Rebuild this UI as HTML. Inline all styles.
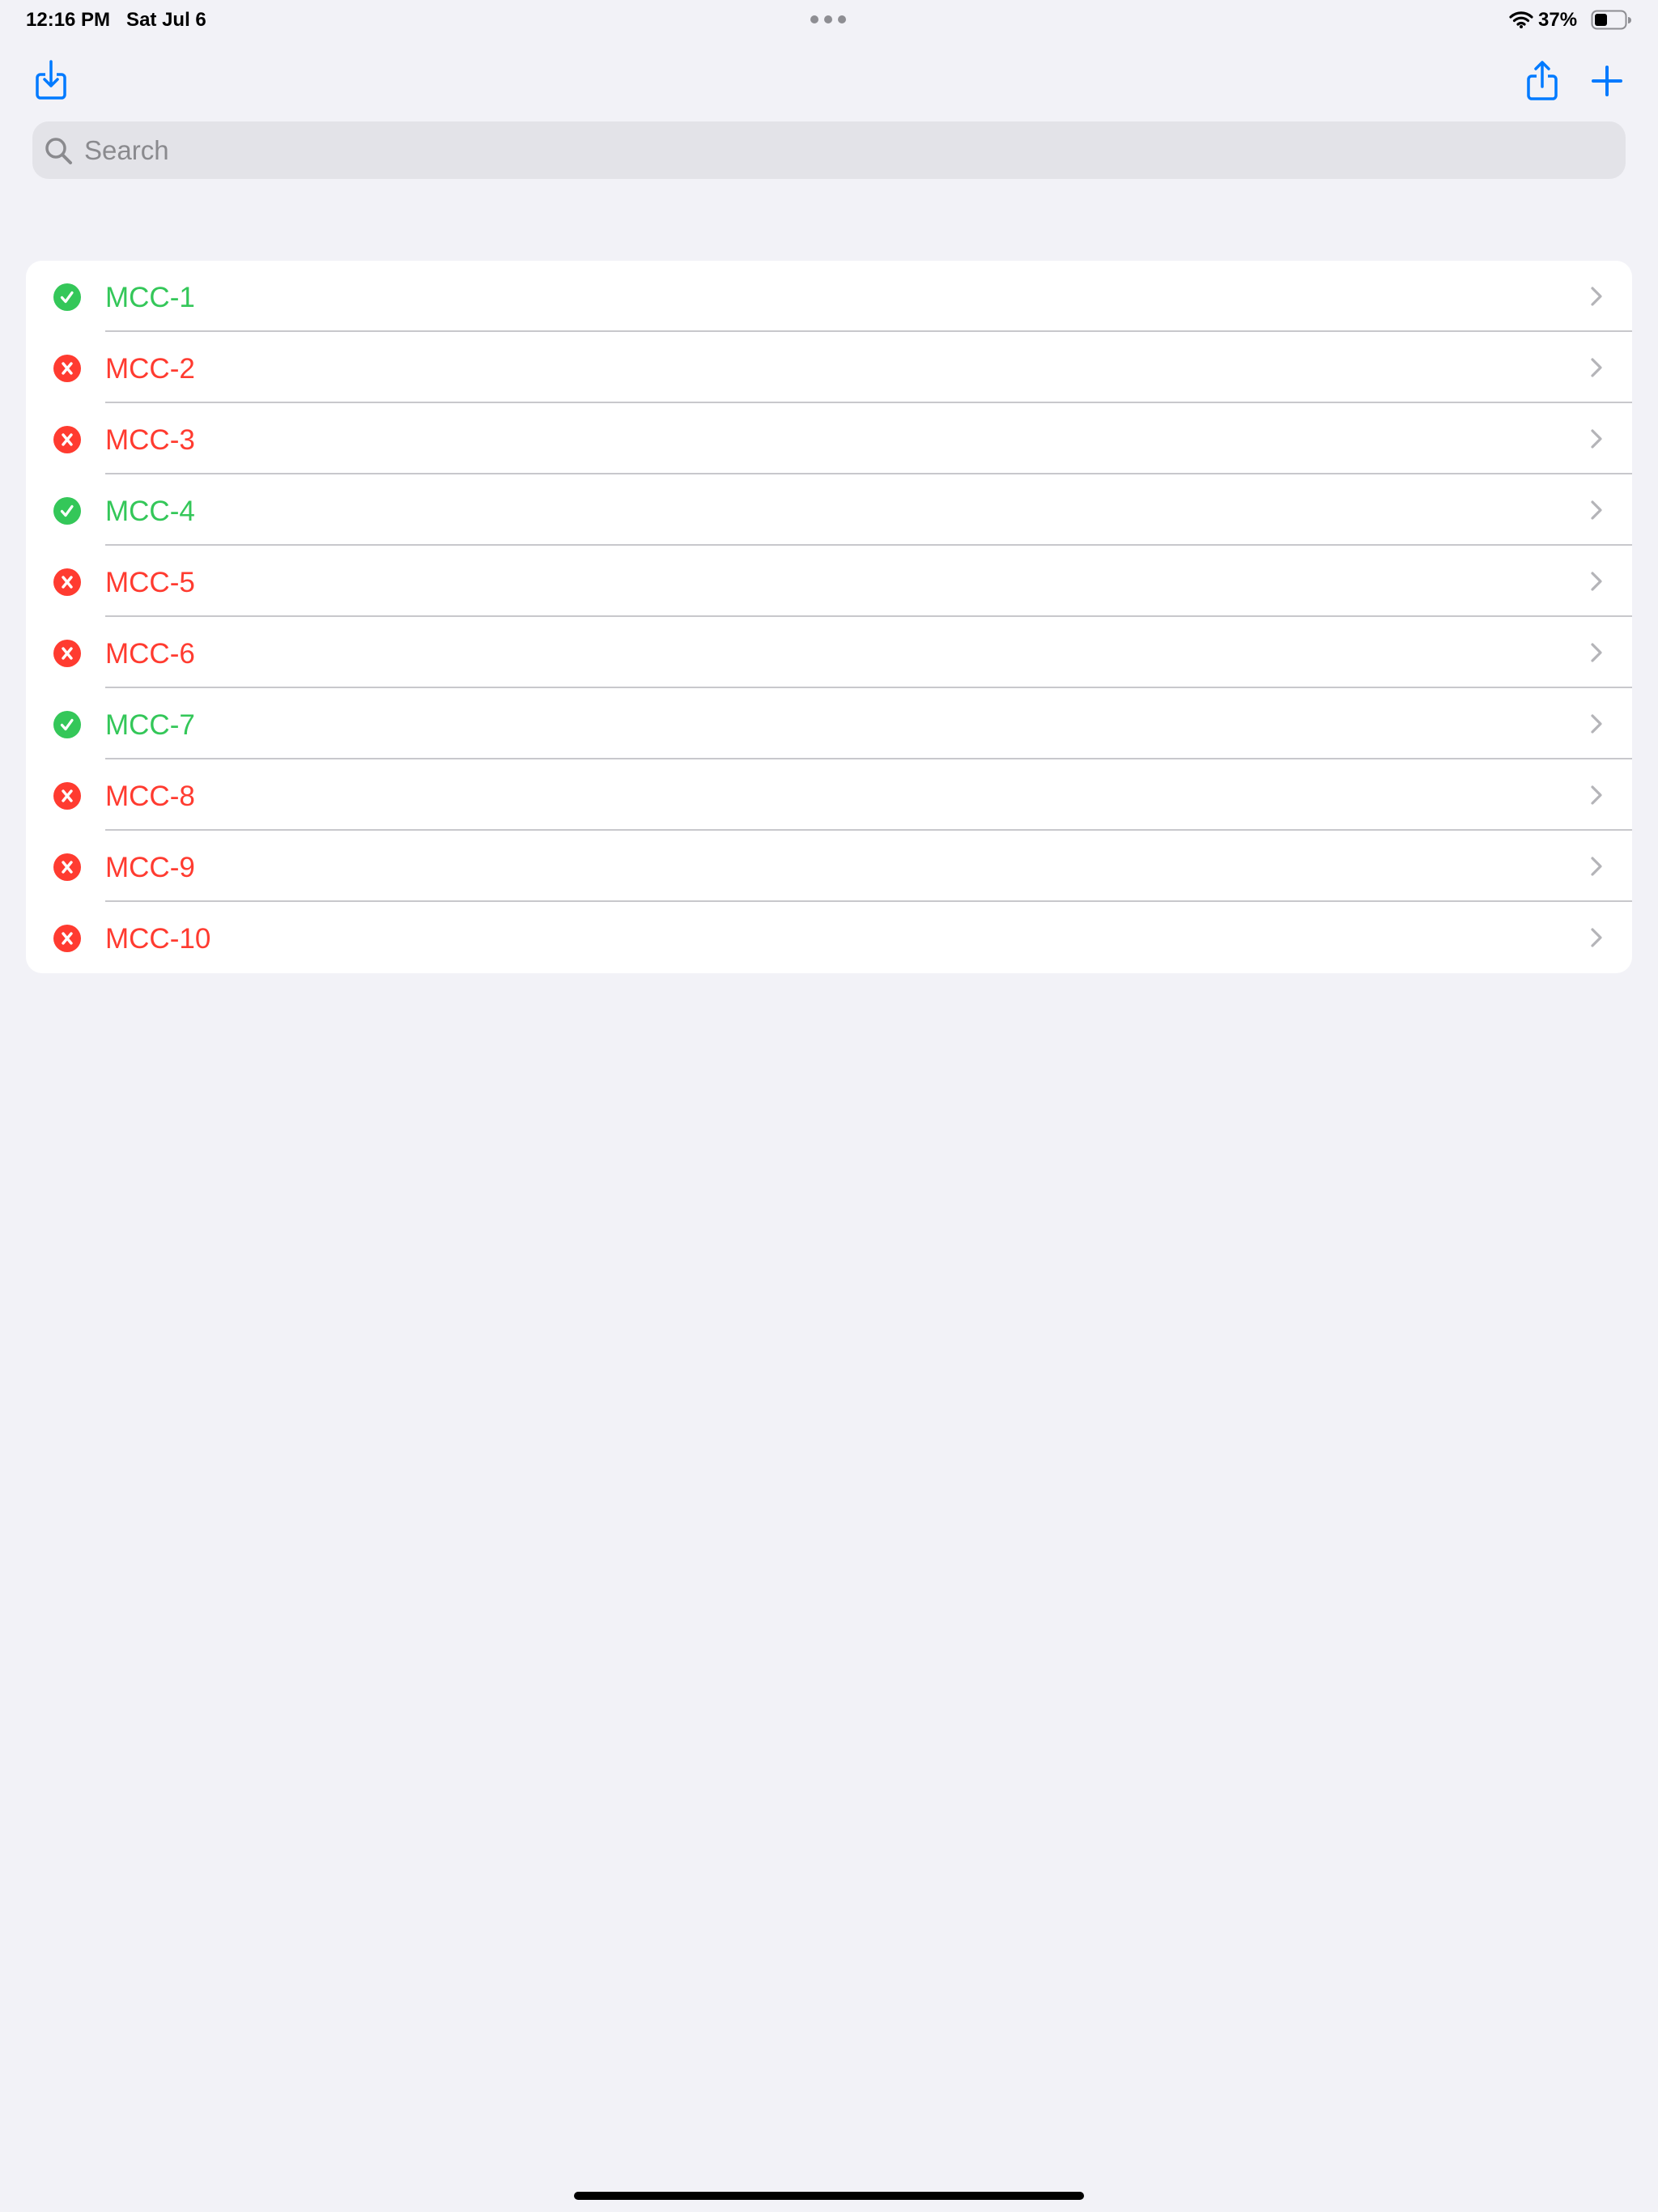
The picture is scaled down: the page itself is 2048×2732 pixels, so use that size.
<!DOCTYPE html>
<html><head><meta charset="utf-8"><style>
*{margin:0;padding:0;box-sizing:border-box}
body{width:2048px;height:2732px;background:#f2f2f7;font-family:"Liberation Sans",sans-serif;position:relative;overflow:hidden}
.abs{position:absolute}
.status{top:11px;font-size:24px;font-weight:bold;color:#000}
.search{left:40px;top:150px;width:1968px;height:71px;background:#e3e3e8;border-radius:20px}
.search span{position:absolute;left:64px;top:17px;font-size:33px;color:#8a8a8e}
.card{left:32px;top:322px;width:1984px;height:880px;background:#fff;border-radius:20px;overflow:hidden}
.row{position:absolute;left:0;width:1984px;height:88px}
.row .t{position:absolute;left:98px;top:26px;font-size:35px}
.row .sep{position:absolute;left:98px;right:0;bottom:0;height:2px;background:#c8c8cc}
.row svg.ic{position:absolute;left:34px;top:28px}
.row svg.ch{position:absolute;left:1932px;top:31px}
.g{color:#34c759}.r{color:#ff3b30}
</style></head><body>
<div class="abs status" style="left:32px">12:16 PM&nbsp;&nbsp;&nbsp;Sat Jul 6</div>
<svg class="abs" style="left:1000px;top:18px" width="46" height="12"><circle cx="6" cy="6" r="5" fill="#8e8e93"/><circle cx="23" cy="6" r="5" fill="#8e8e93"/><circle cx="40" cy="6" r="5" fill="#8e8e93"/></svg>
<svg class="abs" style="left:1864px;top:13px" width="30" height="22" viewBox="0 0 30 22"><path d="M2 8a19 19 0 0 1 26 0M6.5 12.5a12.5 12.5 0 0 1 17 0M11 17a6 6 0 0 1 8 0" stroke="#000" stroke-width="3.2" fill="none" stroke-linecap="round"/><circle cx="15" cy="20" r="2" fill="#000"/></svg>
<div class="abs status" style="left:1900px">37%</div>
<svg class="abs" style="left:1965px;top:12px" width="50" height="26"><rect x="1.5" y="1.5" width="42" height="22" rx="6" fill="none" stroke="#8e8e93" stroke-width="2"/><rect x="5" y="5" width="15" height="15" rx="3" fill="#000"/><path d="M46 9v8a3 3 0 0 0 0-8z" fill="#8e8e93"/></svg>
<svg class="abs" style="left:42px;top:74px" width="46" height="50" viewBox="0 0 46 50"><path d="M14 18H8a4 4 0 0 0-4 4v21a4 4 0 0 0 4 4h26a4 4 0 0 0 4-4V22a4 4 0 0 0-4-4h-6" fill="none" stroke="#007aff" stroke-width="3.5"/><path d="M21 2v30M13 24l8 8 8-8" fill="none" stroke="#007aff" stroke-width="3.5" stroke-linecap="round" stroke-linejoin="round"/></svg>
<svg class="abs" style="left:1884px;top:74px" width="44" height="52" viewBox="0 0 44 52"><path d="M14 20H8a4 4 0 0 0-4 4v20a4 4 0 0 0 4 4h26a4 4 0 0 0 4-4V24a4 4 0 0 0-4-4h-6" fill="none" stroke="#007aff" stroke-width="3.5"/><path d="M21 33V3M13 11l8-8 8 8" fill="none" stroke="#007aff" stroke-width="3.5" stroke-linecap="round" stroke-linejoin="round"/></svg>
<svg class="abs" style="left:1965px;top:80px" width="40" height="40"><path d="M20 3v34M3 20h34" stroke="#007aff" stroke-width="4" stroke-linecap="round"/></svg>
<div class="abs search"><svg style="position:absolute;left:14px;top:18px" width="38" height="38" viewBox="0 0 38 38"><circle cx="15" cy="15" r="11" fill="none" stroke="#8a8a8e" stroke-width="3.5"/><path d="M23 23l10 10" stroke="#8a8a8e" stroke-width="4" stroke-linecap="round"/></svg><span>Search</span></div>
<div class="abs card">
</div>
<div class="abs" style="left:709px;top:2707px;width:630px;height:10px;background:#000;border-radius:5px"></div>
<script>
var st=[1,0,0,1,0,0,1,0,0,0],h='';
for(var i=0;i<10;i++){var ok=st[i];var c=ok?'#34c759':'#ff3b30';
h+='<div class="row" style="top:'+(i*88)+'px"><svg class="ic" width="34" height="34" viewBox="0 0 34 34"><circle cx="17" cy="17" r="17" fill="'+c+'"/>'+(ok?'<path d="M10.5 17.5l4.5 5 8-11" stroke="#fff" stroke-width="3.2" fill="none" stroke-linecap="round" stroke-linejoin="round"/>':'<path d="M12 11l10 12M22 11l-10 12" stroke="#fff" stroke-width="3.4" stroke-linecap="round"/>')+'</svg><div class="t '+(ok?'g':'r')+'">MCC-'+(i+1)+'</div><svg class="ch" width="16" height="26" viewBox="0 0 16 26"><path d="M3 3l10 10-10 10" stroke="#b4b4b8" stroke-width="3.2" fill="none" stroke-linecap="round" stroke-linejoin="round"/></svg>'+(i<9?'<div class="sep"></div>':'')+'</div>';}
document.querySelector('.card').innerHTML=h;
</script>
</body></html>
